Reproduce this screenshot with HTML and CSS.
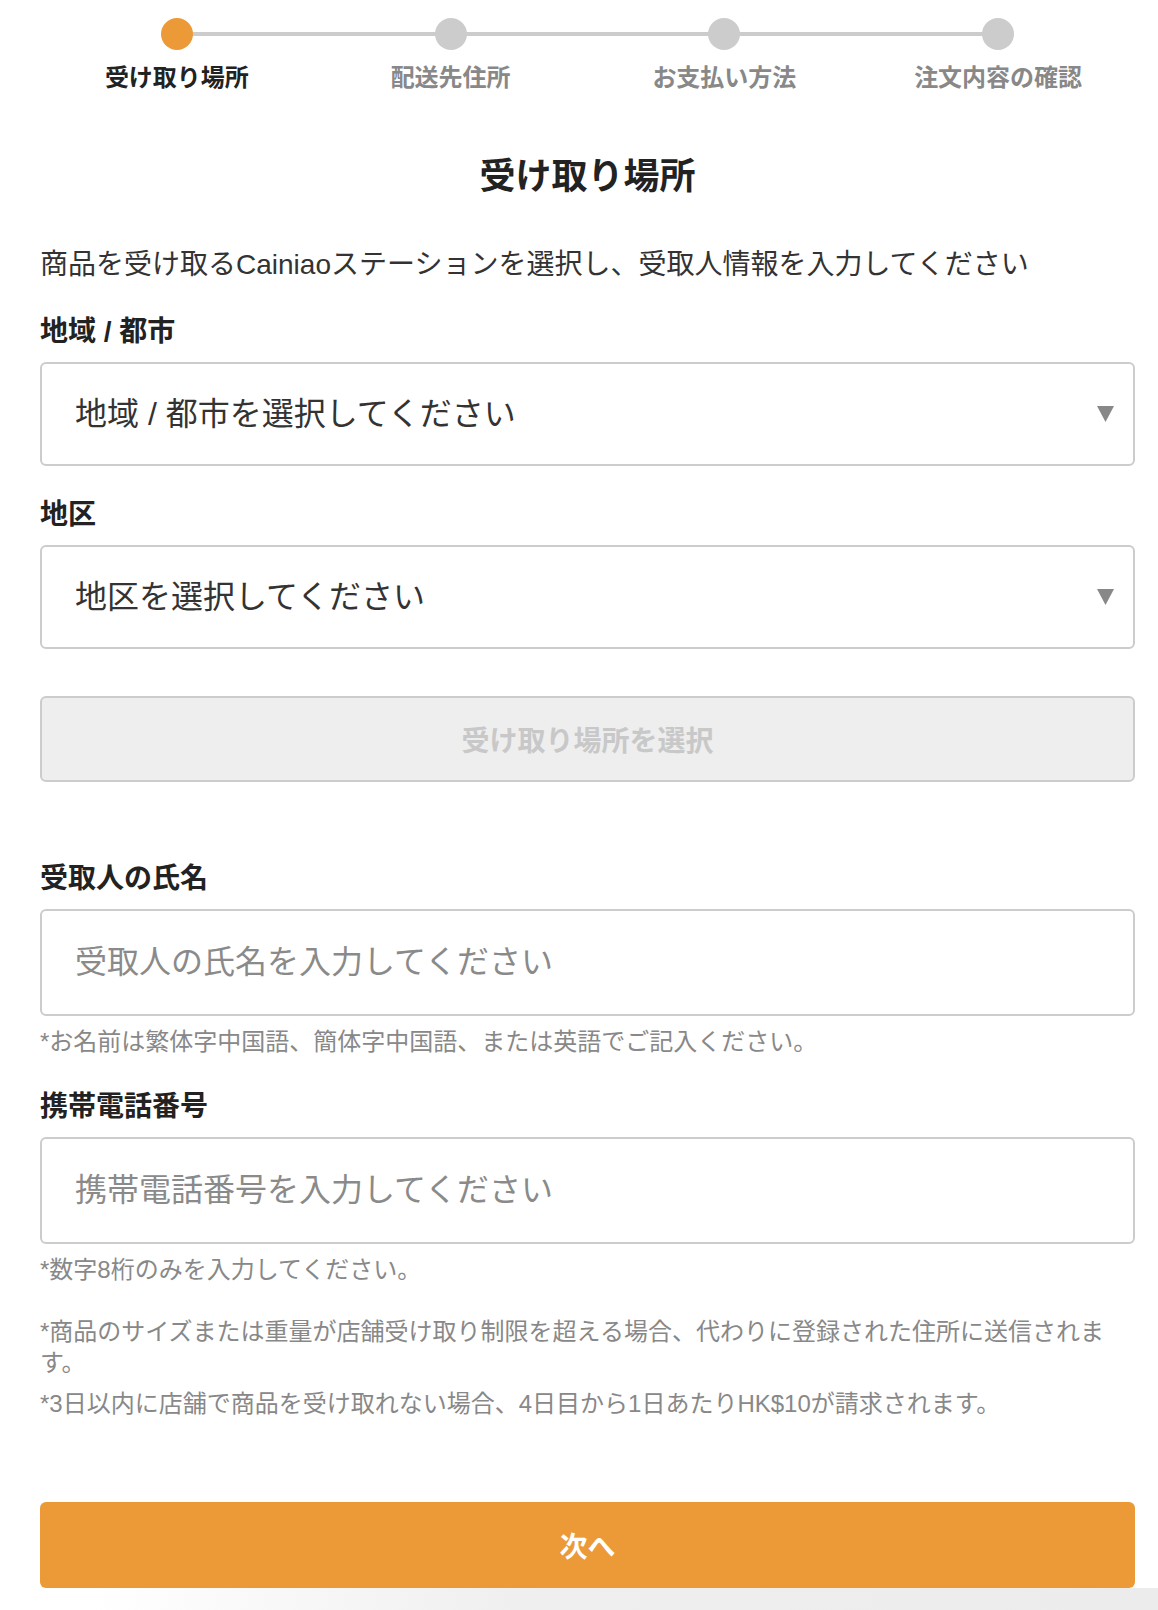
FILE: index.html
```html
<!DOCTYPE html>
<html lang="ja">
<head>
  <meta charset="UTF-8">
  <meta name="viewport" content="width=device-width, initial-scale=1.0">
  <title>受け取り場所</title>
  <link rel="stylesheet" href="styles.css">
</head>
<body>

  <div class="page">
    <div class="steps">
      <div class="step active">
        <div class="dot"></div>
        <div class="step-name">受け取り場所</div>
      </div>
      <div class="step">
        <div class="dot"></div>
        <div class="step-name">配送先住所</div>
      </div>
      <div class="step">
        <div class="dot"></div>
        <div class="step-name">お支払い方法</div>
      </div>
      <div class="step">
        <div class="dot"></div>
        <div class="step-name">注文内容の確認</div>
      </div>
    </div>

    <h1 class="title">受け取り場所</h1>
    <p class="intro">商品を受け取るCainiaoステーションを選択し、受取人情報を入力してください</p>

    <div class="field">
      <label class="field-label">地域 / 都市</label>
      <div class="select-wrap">
        <select class="select">
          <option>地域 / 都市を選択してください</option>
        </select>
        <svg class="arrow" width="17" height="16" viewBox="0 0 17 16"><polygon points="0,0 17,0 8.5,16" fill="#888"/></svg>
      </div>
    </div>

    <div class="field">
      <label class="field-label">地区</label>
      <div class="select-wrap">
        <select class="select">
          <option>地区を選択してください</option>
        </select>
        <svg class="arrow" width="17" height="16" viewBox="0 0 17 16"><polygon points="0,0 17,0 8.5,16" fill="#888"/></svg>
      </div>
    </div>

    <button class="btn-pick" disabled>受け取り場所を選択</button>

    <div class="field person">
      <label class="field-label">受取人の氏名</label>
      <input class="input" type="text" placeholder="受取人の氏名を入力してください">
      <p class="hint">*お名前は繁体字中国語、簡体字中国語、または英語でご記入ください。</p>
    </div>

    <div class="field phone">
      <label class="field-label">携帯電話番号</label>
      <input class="input" type="tel" placeholder="携帯電話番号を入力してください">
      <p class="hint">*数字8桁のみを入力してください。</p>
    </div>

    <div class="notes">
      <p class="note">*商品のサイズまたは重量が店舗受け取り制限を超える場合、代わりに登録された住所に送信されます。</p>
      <p class="note">*3日以内に店舗で商品を受け取れない場合、4日目から1日あたりHK$10が請求されます。</p>
    </div>

    <button class="btn-next">次へ</button>
  </div>
  <div class="bottom-shade"></div>

</body>
</html>
```

FILE: styles.css
```css
body {
  margin: 0;
  background: #fff;
  font-family: "Liberation Sans", "Noto Sans CJK JP", sans-serif;
  color: #333;
}

.page {
  padding: 0 23px 0 40px;
}

/* steps */
.steps {
  display: grid;
  grid-template-columns: repeat(4, 1fr);
}

.step {
  position: relative;
  display: flex;
  flex-direction: column;
  align-items: center;
}

.step:not(:last-child)::after {
  content: "";
  position: absolute;
  top: 32px;
  left: 50%;
  width: 100%;
  height: 4px;
  background: #ccc;
}

.dot {
  position: relative;
  z-index: 1;
  width: 32px;
  height: 32px;
  margin-top: 18px;
  border-radius: 50%;
  background: #ccc;
}

.step.active .dot {
  background: #ec9a37;
}

.step-name {
  margin-top: 13px;
  font-size: 24px;
  line-height: 30px;
  font-weight: bold;
  color: #888;
}

.step.active .step-name {
  color: #222;
}

.title {
  margin: 62px 0 0;
  text-align: center;
  font-size: 36px;
  line-height: 44px;
  font-weight: bold;
  color: #222;
}

.intro {
  margin: 48px 0 0;
  font-size: 28px;
  line-height: 36px;
  color: #333;
}

/* fields */
.field {
  display: flex;
  flex-direction: column;
  margin-top: 31px;
}

.field-label {
  margin-bottom: 12px;
  font-size: 28px;
  line-height: 36px;
  font-weight: bold;
  color: #222;
}

.select-wrap {
  position: relative;
}

.select,
.input {
  box-sizing: border-box;
  width: 100%;
  margin: 0;
  padding: 0 60px 0 33px;
  border: 2px solid #ccc;
  border-radius: 6px;
  background: #fff;
  font-family: inherit;
  font-size: 32px;
  color: #333;
  outline: none;
}

.select {
  height: 104px;
  appearance: none;
  -webkit-appearance: none;
}

.input {
  height: 107px;
}

.input::placeholder {
  color: #8a8a8a;
}

.arrow {
  position: absolute;
  top: 44px;
  right: 21px;
}

.btn-pick {
  display: block;
  box-sizing: border-box;
  width: 100%;
  height: 86px;
  margin-top: 47px;
  border: 2px solid #ccc;
  border-radius: 6px;
  background: #eee;
  font-family: inherit;
  font-size: 28px;
  font-weight: bold;
  color: #c8c8c8;
}

.person {
  margin-top: 79px;
}

.phone {
  margin-top: 31px;
}

.hint {
  margin: 10px 0 0;
  font-size: 24px;
  line-height: 32px;
  color: #888;
}

.notes {
  margin-top: 30px;
}

.note {
  margin: 0 0 10px;
  font-size: 24px;
  line-height: 31px;
  color: #888;
}

.btn-next {
  display: block;
  width: 100%;
  height: 86px;
  margin-top: 83px;
  border: none;
  border-radius: 6px;
  background: #ec9a37;
  font-family: inherit;
  font-size: 28px;
  font-weight: bold;
  color: #fff;
}

.bottom-shade {
  height: 25px;
  background: linear-gradient(90deg, #fff 8%, #efefef 45%, #ececec);
}
```
